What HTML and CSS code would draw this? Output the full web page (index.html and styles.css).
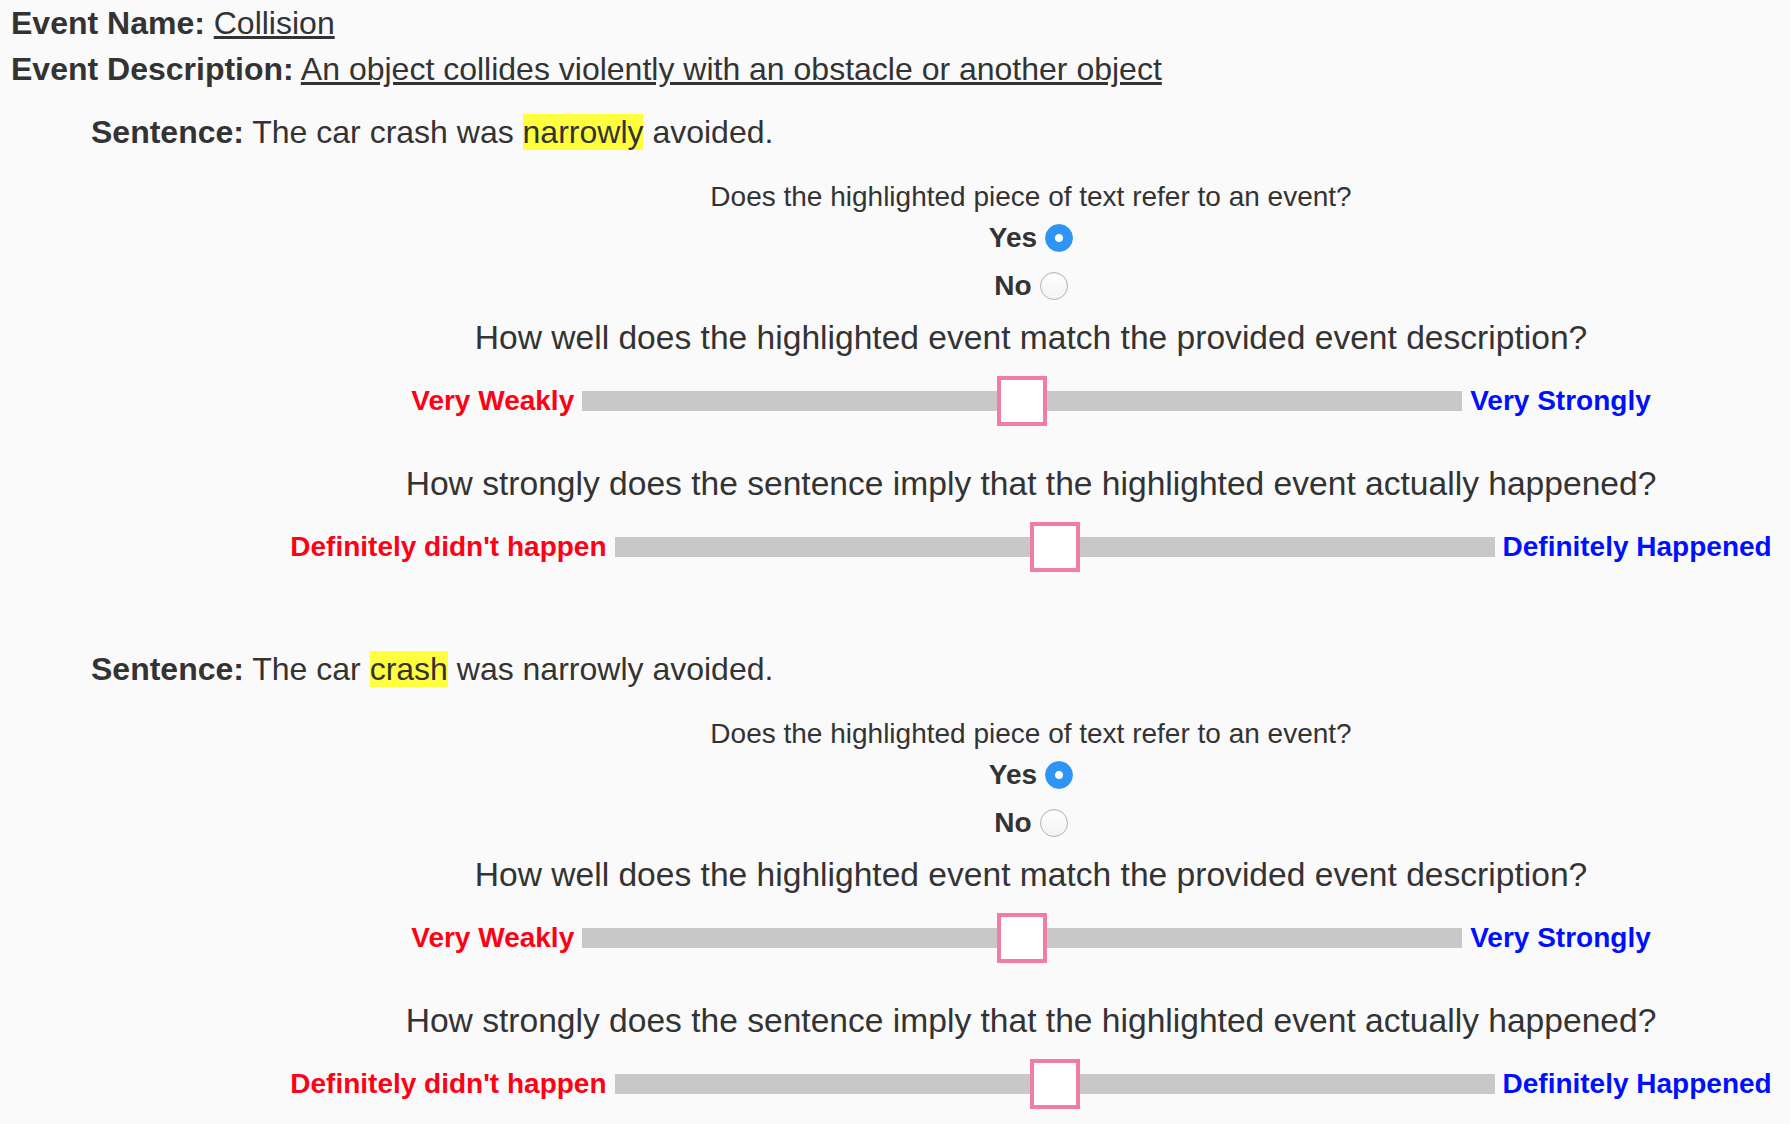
FILE: index.html
```html
<!DOCTYPE html>
<html lang="en">
<head>
    <meta charset="UTF-8">
    <meta name="viewport" content="width=device-width, initial-scale=1.0">
    <title>Event Annotation</title>
    <link rel="stylesheet" href="styles.css">
</head>
<body>
    <div class="event-info">
        <div class="event-line"><b>Event Name:</b> <u>Collision</u></div>
        <div class="event-line"><b>Event Description:</b> <u>An object collides violently with an obstacle or another object</u></div>
    </div>

    <!-- first sentence -->
    <div class="item">
        <p class="sentence"><b>Sentence:</b> The car crash was <span class="hl">narrowly</span> avoided.</p>
        <div class="questions">
            <p class="q-event">Does the highlighted piece of text refer to an event?</p>
            <label class="choice"><span>Yes</span><input type="radio" name="event1" value="yes" checked></label>
            <label class="choice"><span>No</span><input type="radio" name="event1" value="no"></label>

            <p class="q-scale">How well does the highlighted event match the provided event description?</p>
            <div class="slider-row">
                <span class="lbl-low">Very Weakly</span>
                <input type="range" name="match1" min="0" max="100" value="50">
                <span class="lbl-high">Very Strongly</span>
            </div>

            <p class="q-scale q-second">How strongly does the sentence imply that the highlighted event actually happened?</p>
            <div class="slider-row">
                <span class="lbl-low">Definitely didn't happen</span>
                <input type="range" name="happened1" min="0" max="100" value="50">
                <span class="lbl-high">Definitely Happened</span>
            </div>
        </div>
    </div>

    <!-- second sentence -->
    <div class="item">
        <p class="sentence"><b>Sentence:</b> The car <span class="hl">crash</span> was narrowly avoided.</p>
        <div class="questions">
            <p class="q-event">Does the highlighted piece of text refer to an event?</p>
            <label class="choice"><span>Yes</span><input type="radio" name="event2" value="yes" checked></label>
            <label class="choice"><span>No</span><input type="radio" name="event2" value="no"></label>

            <p class="q-scale">How well does the highlighted event match the provided event description?</p>
            <div class="slider-row">
                <span class="lbl-low">Very Weakly</span>
                <input type="range" name="match2" min="0" max="100" value="50">
                <span class="lbl-high">Very Strongly</span>
            </div>

            <p class="q-scale q-second">How strongly does the sentence imply that the highlighted event actually happened?</p>
            <div class="slider-row">
                <span class="lbl-low">Definitely didn't happen</span>
                <input type="range" name="happened2" min="0" max="100" value="50">
                <span class="lbl-high">Definitely Happened</span>
            </div>
        </div>
    </div>
</body>
</html>
```

FILE: styles.css
```css
body {
    font-family: "Liberation Sans", Arial, sans-serif;
    color: #333;
    background-color: #fafafa;
    margin: 0;
    padding: 0 0 0 11px;
    overflow: hidden;
}
.event-line {
    font-size: 32px;
    line-height: 46px;
}
.item {
    padding: 20px 0 57px 80px;
}
.sentence {
    margin: 0;
    font-size: 32px;
    line-height: 40px;
}
.hl {
    background-color: #ffff40;
}
.questions {
    margin-left: 181px;
    text-align: center;
}
.q-event {
    margin: 28px 0 0;
    font-size: 28px;
    line-height: 34px;
}
.choice {
    display: flex;
    justify-content: center;
    align-items: center;
    height: 48px;
    font-size: 28px;
    font-weight: bold;
}
.choice input {
    -webkit-appearance: none;
    appearance: none;
    width: 28px;
    height: 28px;
    margin: 0 0 0 8px;
    border: 1px solid #b4b4b4;
    border-radius: 50%;
    background: linear-gradient(#fff, #f3f3f3);
    box-shadow: inset 0 1px 1px rgba(0, 0, 0, 0.06);
}
.choice input:checked {
    border-color: #2f95f5;
    background: radial-gradient(circle, #fff 0, #fff 3.5px, #2f95f5 4.5px);
    box-shadow: none;
}
.q-scale {
    margin: 8px 0 0;
    font-size: 33.6px;
    line-height: 40px;
}
.q-second {
    margin-top: 38px;
}
.slider-row {
    display: flex;
    justify-content: center;
    align-items: center;
    gap: 8px;
    height: 50px;
    margin-top: 18px;
    font-size: 28px;
    font-weight: bold;
}
.lbl-low {
    color: #ff0015;
}
.lbl-high {
    color: #0010ff;
}
input[type="range"] {
    -webkit-appearance: none;
    appearance: none;
    width: 880px;
    height: 50px;
    margin: 0;
    background: transparent;
}
input[type="range"]::-webkit-slider-runnable-track {
    height: 20px;
    background-color: #c8c8c8;
}
input[type="range"]::-webkit-slider-thumb {
    -webkit-appearance: none;
    box-sizing: border-box;
    width: 50px;
    height: 50px;
    margin-top: -15px;
    border: 4px solid #f07ea1;
    background-color: #fff;
}
```
